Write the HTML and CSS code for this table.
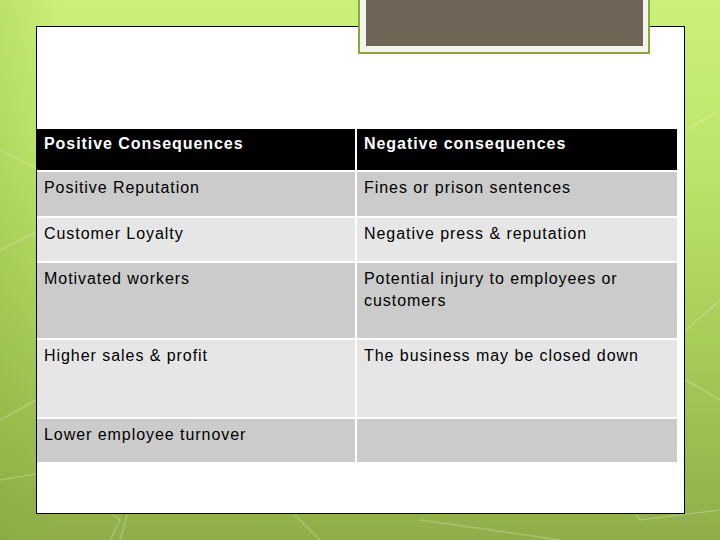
FILE: index.html
```html
<!DOCTYPE html>
<html>
<head>
<meta charset="utf-8">
<link rel="stylesheet" href="styles.css">
</head>
<body>
<div class="slide">
  <svg class="bg-lines" width="720" height="540" viewBox="0 0 720 540">
    <g stroke="#ffffff" stroke-opacity="0.22" stroke-width="1.5" fill="none">
      <path d="M0 250 L40 230 L40 170 L0 150"/>
      <path d="M0 420 L36 400 M0 480 L60 470 L120 520 L110 540"/>
      <path d="M140 470 L120 540 M250 470 L320 540"/>
      <path d="M686 130 L720 110 M686 330 L720 300 M686 380 L720 400"/>
      <path d="M420 520 L560 540 M600 470 L640 520 L720 510"/>
    </g>
  </svg>
  <div class="title-box"><div class="title-inner"></div></div>
  <div class="panel">
    <div class="table">
      <div class="cell head">Positive Consequences</div>
      <div class="cell head">Negative consequences</div>
      <div class="cell dark r1">Positive Reputation</div>
      <div class="cell dark r1">Fines or prison sentences</div>
      <div class="cell light r2">Customer Loyalty</div>
      <div class="cell light r2">Negative press &amp; reputation</div>
      <div class="cell dark r3">Motivated workers</div>
      <div class="cell dark r3">Potential injury to employees or customers</div>
      <div class="cell light r4">Higher sales &amp; profit</div>
      <div class="cell light r4">The business may be closed down</div>
      <div class="cell dark r5">Lower employee turnover</div>
      <div class="cell dark r5"></div>
    </div>
  </div>
</div>
</body>
</html>
```
FILE: styles.css
```css
html, body {
  margin: 0;
  padding: 0;
}
body {
  width: 720px;
  height: 540px;
  overflow: hidden;
  font-family: "Liberation Sans", Arial, sans-serif;
}
.slide {
  position: relative;
  width: 720px;
  height: 540px;
  overflow: hidden;
  background:
    linear-gradient(90deg, rgba(120,160,40,0.18) 0px, rgba(120,160,40,0) 60px),
    linear-gradient(180deg, #caf078 0%, #c0e76d 25%, #a9cf5a 60%, #8fae4a 100%);
  display: flex;
  flex-direction: column;
}
.bg-lines {
  position: absolute;
  left: 0;
  top: 0;
}
.panel {
  position: relative;
  margin: 26px 0 0 36px;
  width: 647px;
  height: 486px;
  background: #ffffff;
  border: 1px solid #000000;
}
.title-box {
  position: absolute;
  left: 358px;
  top: -10px;
  width: 277px;
  height: 54px;
  border: 2px solid #86a93a;
  background: #f4f4ee;
  padding: 0 5px 6px 6px;
  z-index: 2;
}
.title-inner {
  width: 100%;
  height: 100%;
  background: #706657;
}
.table {
  margin: 102px 0 0 0;
  display: grid;
  grid-template-columns: 318px 320px;
  grid-template-rows: 41px 44px 43px 75px 77px 43px;
  gap: 2px;
}
.cell {
  padding: 5px 7px 4px 7px;
  font-size: 16px;
  line-height: 22px;
  letter-spacing: 0.95px;
  color: #000000;
}
.head {
  padding-top: 4px;
  background: #000000;
  color: #ffffff;
  font-weight: bold;
}
.dark {
  background: #cbcbcb;
}
.light {
  background: #e6e6e6;
}
```
